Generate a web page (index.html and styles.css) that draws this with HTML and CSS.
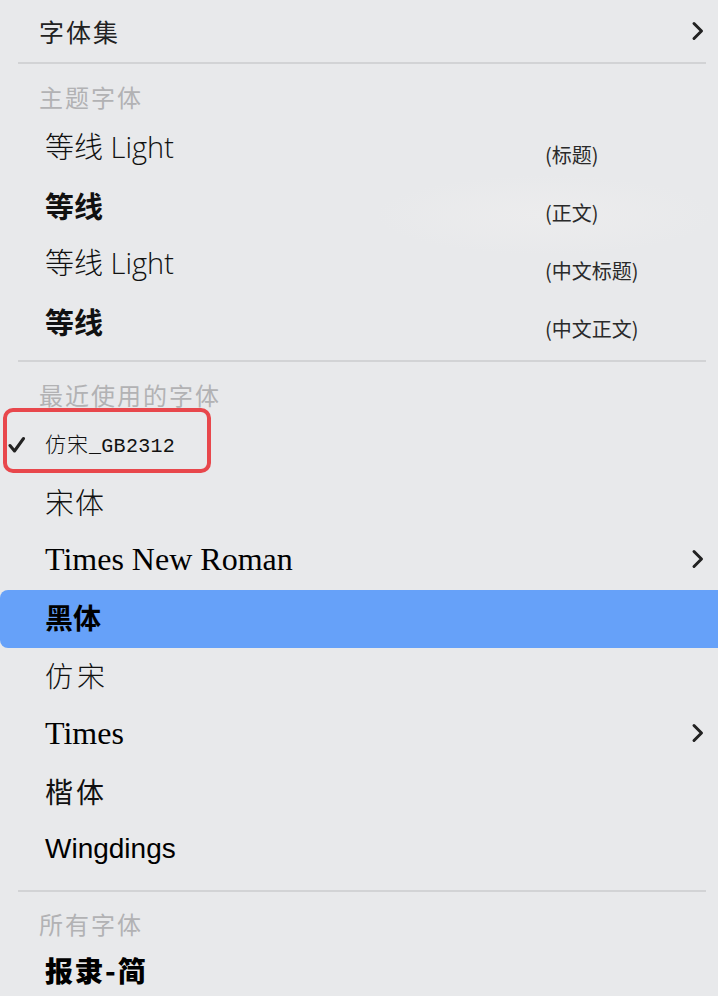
FILE: index.html
```html
<!DOCTYPE html>
<html lang="zh-CN">
<head>
<meta charset="utf-8">
<title>字体菜单</title>
<link rel="stylesheet" href="styles.css">
</head>
<body>
<div class="menu">
  <div class="item top">
    <span class="ui">字体集</span>
    <svg class="chev" width="14" height="20" viewBox="0 0 14 20"><path d="M3 2.5 L10.5 10 L3 17.5" fill="none" stroke="#222" stroke-width="3" stroke-linecap="round" stroke-linejoin="round"/></svg>
  </div>
  <div class="divider first"></div>
  <div class="header h1">主题字体</div>
  <div class="item"><span class="name dx-light">等线 Light</span><span class="label">(标题)</span></div>
  <div class="item"><span class="name dx-bold">等线</span><span class="label">(正文)</span></div>
  <div class="item"><span class="name dx-light">等线 Light</span><span class="label">(中文标题)</span></div>
  <div class="item"><span class="name dx-bold">等线</span><span class="label">(中文正文)</span></div>
  <div class="divider"></div>
  <div class="header h2">最近使用的字体</div>
  <div class="item checked">
    <span class="check"><svg width="18" height="18" viewBox="0 0 18 18"><path d="M2 9.5 L6.5 15 L15.5 2.5" fill="none" stroke="#222" stroke-width="3" stroke-linecap="round" stroke-linejoin="round"/></svg></span>
    <span class="fangsong-gb">仿宋<span class="mono">_GB2312</span></span>
    <span class="annot"></span>
  </div>
  <div class="item"><span class="songti">宋体</span></div>
  <div class="item">
    <span class="times">Times New Roman</span>
    <svg class="chev" width="14" height="20" viewBox="0 0 14 20"><path d="M3 2.5 L10.5 10 L3 17.5" fill="none" stroke="#222" stroke-width="3" stroke-linecap="round" stroke-linejoin="round"/></svg>
  </div>
  <div class="item selected"><span class="heiti">黑体</span></div>
  <div class="item"><span class="fangsong">仿宋</span></div>
  <div class="item">
    <span class="times">Times</span>
    <svg class="chev" width="14" height="20" viewBox="0 0 14 20"><path d="M3 2.5 L10.5 10 L3 17.5" fill="none" stroke="#222" stroke-width="3" stroke-linecap="round" stroke-linejoin="round"/></svg>
  </div>
  <div class="item"><span class="kaiti">楷体</span></div>
  <div class="item"><span class="wing">Wingdings</span></div>
  <div class="divider last"></div>
  <div class="header h3">所有字体</div>
  <div class="item"><span class="lishu">报隶-简</span></div>
</div>
</body>
</html>
```

FILE: styles.css
```css
html {
  background: #e8e9eb;
}
body {
  margin: 0;
  width: 718px;
  height: 996px;
  overflow: hidden;
  background:
    radial-gradient(ellipse 170px 40px at 545px 215px, #ececed 0%, rgba(236,236,237,0.5) 55%, rgba(232,233,235,0) 100%),
    #e8e9eb;
  font-family: "Noto Sans CJK SC", "Noto Sans", sans-serif;
  color: #111;
}
.menu {
  display: flex;
  flex-direction: column;
}
.item {
  position: relative;
  display: flex;
  align-items: center;
  height: 58px;
  box-sizing: border-box;
  padding: 0 0 4px 45px;
  flex: 0 0 auto;
}
.item.top {
  height: 62px;
  padding: 0 0 0 39px;
}
.ui {
  font-size: 25px;
  letter-spacing: 2px;
  color: #222;
  line-height: 30px;
}
.chev {
  margin-left: auto;
  margin-right: 13px;
  flex: 0 0 auto;
}
.divider {
  height: 2px;
  background: #d2d3d5;
  margin: 8px 12px 0 18px;
  flex: 0 0 auto;
}
.divider.first {
  margin-top: 0;
}
.divider.last {
  margin-top: 10px;
}
.header {
  box-sizing: border-box;
  padding: 20px 0 0 39px;
  font-size: 24px;
  letter-spacing: 2px;
  line-height: 26px;
  color: #b2b2b4;
  flex: 0 0 auto;
}
.header.h1 { height: 56px; }
.header.h2 { height: 54px; }
.header.h3 { height: 51px; padding-top: 19px; }

.name {
  width: 500px;
  flex: 0 0 auto;
  font-size: 29px;
  line-height: 36px;
}
.dx-light {
  font-family: "Open Sans", "Noto Sans CJK SC", sans-serif;
  font-weight: 300;
}
.dx-light .lat {
  font-size: 30px;
}
.dx-bold {
  font-weight: 700;
}
.label {
  margin-top: 16px;
  font-size: 20px;
  color: #2a2a2a;
  line-height: 24px;
}

.item.checked {
  padding-left: 8px;
}
.check {
  width: 37px;
  display: flex;
  align-items: center;
  padding-top: 4px;
}
.fangsong-gb {
  font-size: 21px;
  font-weight: 300;
  letter-spacing: 1px;
  color: #111;
}
.mono {
  font-family: "Liberation Mono", monospace;
  font-size: 20px;
  letter-spacing: 0.3px;
}
.annot {
  position: absolute;
  left: 3px;
  top: -8px;
  width: 208px;
  height: 65px;
  box-sizing: border-box;
  border: 4px solid #e8474c;
  border-radius: 10px;
}
.songti {
  font-family: "Liberation Serif", "Noto Sans CJK SC", serif;
  font-size: 29px;
  font-weight: 300;
  letter-spacing: 1px;
}
.times {
  font-family: "Liberation Serif", serif;
  font-size: 32px;
  color: #000;
}
.item.selected {
  background: #66a1f9;
  border-radius: 8px 0 0 8px;
}
.heiti {
  font-size: 28px;
  font-weight: 700;
  color: #000;
}
.fangsong {
  font-size: 28px;
  font-weight: 300;
  letter-spacing: 4px;
}
.kaiti {
  font-size: 28px;
  font-weight: 400;
  letter-spacing: 3px;
}
.wing {
  font-family: "Liberation Sans", sans-serif;
  font-size: 28px;
  color: #000;
}
.lishu {
  font-size: 28px;
  font-weight: 900;
  letter-spacing: 2px;
  color: #000;
}
```
